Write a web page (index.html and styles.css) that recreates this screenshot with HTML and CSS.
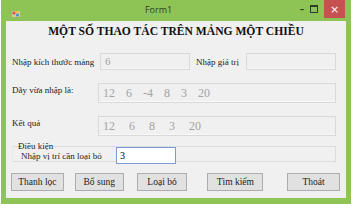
FILE: index.html
```html
<!DOCTYPE html>
<html lang="vi">
<head>
    <meta charset="UTF-8">
    <title>Form1</title>
    <link rel="stylesheet" href="styles.css">
</head>
<body>
    <div class="window">
        <div class="title-bar">
            <div class="app-icon">
                <svg width="10" height="10" viewBox="0 0 10 10">
                    <rect x="1" y="2" width="8" height="6" fill="#d8c8a0"/>
                    <circle cx="3" cy="4" r="1.6" fill="#e05040"/>
                    <circle cx="6.5" cy="6" r="1.6" fill="#4a90d0"/>
                    <circle cx="6" cy="3" r="1.2" fill="#f0c030"/>
                </svg>
            </div>
            <div class="title">Form1</div>
            <div class="controls">
                <span class="ctl min">&#8211;</span>
                <span class="ctl max"><i></i></span>
                <span class="ctl close">&#215;</span>
            </div>
        </div>

        <div class="client">
            <h1 class="heading">MỘT SỐ THAO TÁC TRÊN MẢNG MỘT CHIỀU</h1>

            <div class="row row-size">
                <label class="lbl lbl-size">Nhập kích thước mảng</label>
                <div class="box box-size">6</div>
                <label class="lbl lbl-value">Nhập giá trị</label>
                <div class="box box-value"></div>
            </div>

            <div class="row row-array">
                <label class="lbl lbl-wide">Dãy vừa nhập là:</label>
                <div class="box box-array">12 6 -4 8 3 20</div>
            </div>

            <div class="row row-result">
                <label class="lbl lbl-wide">Kết quả</label>
                <div class="box box-array box-result">12 6 8 3 20</div>
            </div>

            <fieldset class="group">
                <legend>Điều kiện</legend>
                <div class="group-row">
                    <label class="lbl">Nhập vị trí cần loại bỏ</label>
                    <div class="input">3</div>
                </div>
            </fieldset>

            <div class="buttons">
                <button class="btn b-filter">Thanh lọc</button>
                <button class="btn b-add">Bổ sung</button>
                <button class="btn b-remove">Loại bỏ</button>
                <button class="btn b-find">Tìm kiếm</button>
                <button class="btn b-exit">Thoát</button>
            </div>
        </div>
    </div>
</body>
</html>
```

FILE: styles.css
```css
body {
    margin: 0;
    background: #ffffff;
    font-family: "Liberation Serif", "Times New Roman", serif;
    color: #1a1a1a;
}
.window {
    margin-left: 1px;
    width: 340px;
    height: 198px;
    padding: 0 5px 6px 5px;
    background: #8ec456;
}
.title-bar {
    height: 21px;
    display: flex;
    align-items: center;
}
.app-icon {
    width: 10px;
    height: 10px;
    margin-left: 5px;
    margin-top: -2px;
}
.title {
    flex: 1;
    text-align: center;
    font-family: "Open Sans", "DejaVu Sans", sans-serif;
    font-size: 9px;
    color: #2f3d20;
    margin-top: -3px;
}
.controls {
    display: flex;
    align-items: flex-start;
    height: 21px;
}
.ctl {
    display: flex;
    align-items: center;
    justify-content: center;
    font-family: "DejaVu Sans", sans-serif;
    color: #2f3d20;
    height: 18px;
}
.min {
    width: 12px;
    font-size: 9px;
    font-weight: bold;
}
.max {
    width: 12px;
}
.max i {
    display: block;
    width: 6px;
    height: 5px;
    border: 1px solid #2f3d20;
    border-top-width: 2px;
}
.close {
    width: 21px;
    margin-left: 4px;
    margin-right: 1px;
    background: #c75050;
    color: #ffffff;
    font-size: 11px;
}
.client {
    height: 177px;
    background: #f0f0f0;
    padding: 0 6px;
}
.heading {
    margin: 0;
    padding-top: 3px;
    height: 23px;
    text-align: center;
    font-size: 11.6px;
    font-weight: bold;
    line-height: 16px;
    color: #111111;
}
.row {
    display: flex;
    align-items: center;
}
.lbl {
    font-size: 9px;
    color: #222222;
    white-space: nowrap;
}
.lbl-size {
    width: 88px;
}
.lbl-value {
    width: 50px;
    margin-left: 4px;
    padding-left: 2px;
}
.lbl-wide {
    width: 86px;
    align-self: flex-start;
    margin-top: 2px;
}
.box {
    box-sizing: border-box;
    background: #f0f0f0;
    border: 1px solid #d9d9d9;
    box-shadow: inset 0 -1px 0 #f8f8f8;
    color: #a3a3a3;
    font-size: 11px;
    padding-left: 4px;
    white-space: pre;
}
.row-size {
    margin-top: 6px;
    height: 17px;
}
.box-size {
    width: 90px;
    height: 17px;
    line-height: 15px;
}
.box-value {
    width: 90px;
    height: 17px;
}
.row-array {
    margin-top: 13px;
}
.row-result {
    margin-top: 13px;
}
.box-array {
    width: 238px;
    height: 20px;
    line-height: 18px;
    font-size: 12px;
    word-spacing: 8px;
}
.box-result {
    word-spacing: 11px;
}
.group {
    margin: 5px 0 0 0;
    padding: 0 0 0 8px;
    height: 19px;
    border: 1px solid #dcdcdc;
    border-left-color: #e8e8e8;
    width: 314px;
    min-width: 0;
}
.group legend {
    font-size: 9px;
    padding: 0;
    margin-left: -3px;
    line-height: 10px;
    color: #222222;
}
.group-row {
    display: flex;
    align-items: center;
    margin-top: -4px;
}
.group-row .lbl {
    width: 95px;
}
.input {
    box-sizing: border-box;
    width: 60px;
    height: 17px;
    border: 1px solid #7a9cd3;
    background: #ffffff;
    font-size: 10px;
    line-height: 15px;
    padding-left: 3px;
    color: #000000;
}
.buttons {
    display: flex;
    margin-top: 11px;
}
.btn {
    box-sizing: border-box;
    height: 18px;
    background: #e1e1e1;
    border: 1px solid #adadad;
    font-family: "Liberation Serif", "Times New Roman", serif;
    font-size: 9.5px;
    color: #222222;
    padding: 0;
}
.b-filter {
    width: 53px;
    margin-left: -1px;
}
.b-add {
    width: 49px;
    margin-left: 11px;
}
.b-remove {
    width: 51px;
    margin-left: 13px;
}
.b-find {
    width: 56px;
    margin-left: 20px;
}
.b-exit {
    width: 53px;
    margin-left: 24px;
}
```
